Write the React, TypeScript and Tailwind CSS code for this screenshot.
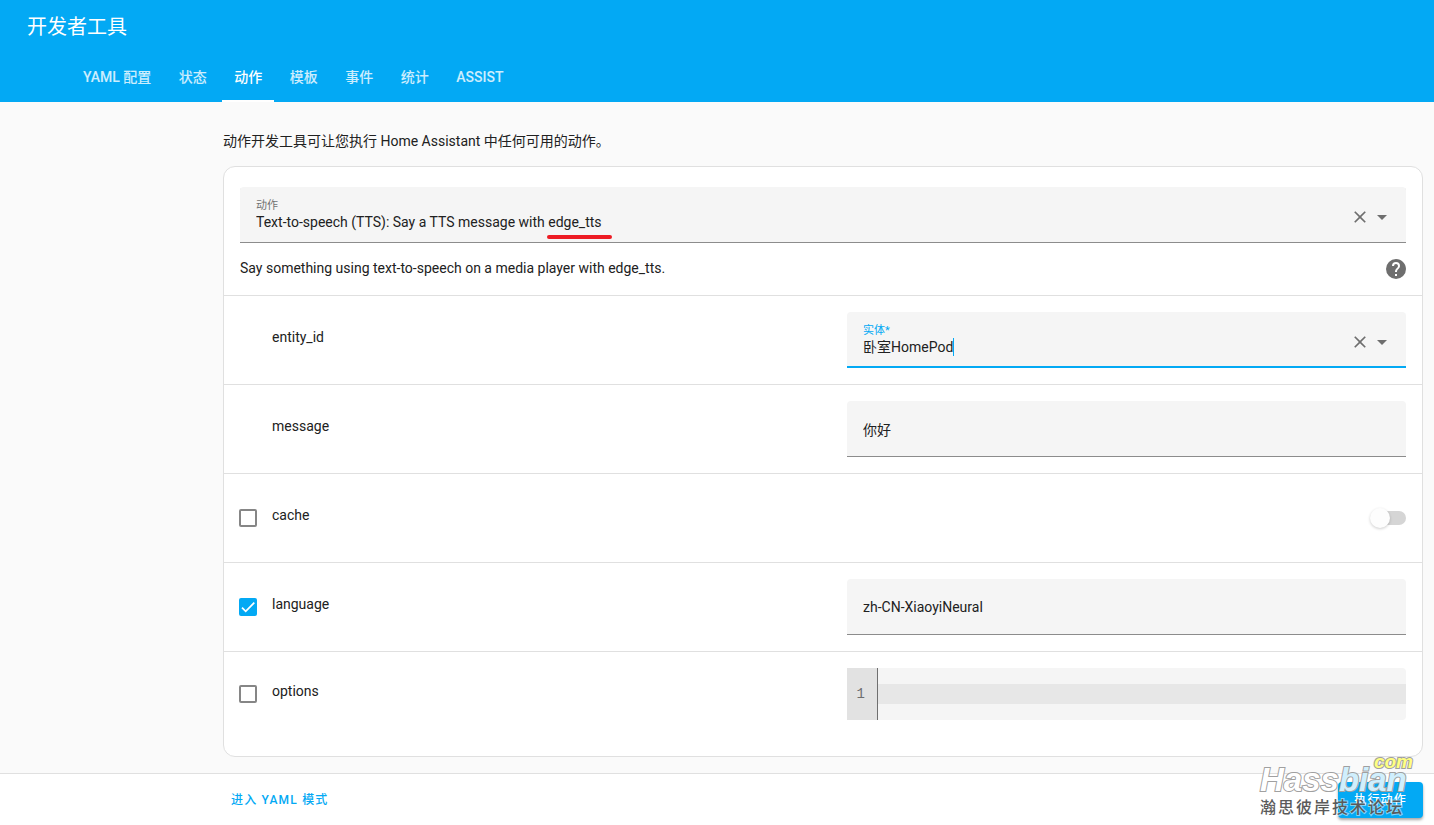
import { useState } from 'react'
import type { ReactNode } from 'react'
import clsx from 'clsx'

const TABS = ['YAML 配置', '状态', '动作', '模板', '事件', '统计', 'ASSIST']

const ICONS = {
  close:
    'M19,6.41L17.59,5L12,10.59L6.41,5L5,6.41L10.59,12L5,17.59L6.41,19L12,13.41L17.59,19L19,17.59L13.41,12L19,6.41Z',
  menuDown: 'M7,10L12,15L17,10H7Z',
  help: 'M15.07,11.25L14.17,12.17C13.45,12.89 13,13.5 13,15H11V14.5C11,13.39 11.45,12.39 12.17,11.67L13.41,10.41C13.78,10.05 14,9.55 14,9C14,7.89 13.1,7 12,7A2,2 0 0,0 10,9H8A4,4 0 0,1 12,5A4,4 0 0,1 16,9C16,9.88 15.64,10.67 15.07,11.25M13,19H11V17H13M12,2A10,10 0 0,0 2,12A10,10 0 0,0 12,22A10,10 0 0,0 22,12C22,6.47 17.5,2 12,2Z',
}

function Icon({
  path,
  className,
  viewBox = '0 0 24 24',
}: {
  path: string
  className: string
  viewBox?: string
}) {
  return (
    <svg viewBox={viewBox} className={className} fill="currentColor" aria-hidden="true">
      <path d={path} />
    </svg>
  )
}

function ComboField({
  id,
  label,
  value,
  active = false,
  children,
}: {
  id: string
  label: string
  value: string
  active?: boolean
  children?: ReactNode
}) {
  const [text, setText] = useState(value)
  return (
    <div
      className={clsx(
        'relative flex h-14 rounded-t bg-[#f5f5f5] pr-3 pl-4',
        active
          ? 'shadow-[inset_0_-2px_0_#03a9f4]'
          : 'shadow-[inset_0_-1px_0_#8c8c8c]',
      )}
    >
      <div className="min-w-0 flex-1 pt-[13px]">
        <label
          htmlFor={id}
          className={clsx(
            'block h-3 text-[11px] leading-3',
            active ? 'text-[#03a9f4]' : 'text-[#727272]',
          )}
        >
          {label}
        </label>
        <div className="flex h-5 items-center">
          <input
            id={id}
            role="combobox"
            aria-expanded={false}
            aria-controls={`${id}-list`}
            value={text}
            onChange={(e) => setText(e.target.value)}
            className={clsx(
              'h-5 bg-transparent leading-5 outline-none',
              active ? 'field-sizing-content caret-transparent' : 'w-full',
            )}
          />
          {active && <span className="h-[18px] w-px bg-[#03a9f4]" />}
        </div>
      </div>
      <div className="flex items-center pt-1 text-[#6e6e6e]">
        <button type="button" aria-label="清除" onClick={() => setText('')}>
          <Icon path={ICONS.close} className="size-5" />
        </button>
        <button type="button" aria-label="展开">
          <Icon path={ICONS.menuDown} className="size-6" />
        </button>
      </div>
      {children}
    </div>
  )
}

function TextField({ id, value }: { id: string; value: string }) {
  return (
    <input
      id={id}
      defaultValue={value}
      className="h-14 w-full rounded-t border-b border-[#8c8c8c] bg-[#f5f5f5] px-4 outline-none"
    />
  )
}

function Checkbox({ id, checked }: { id: string; checked: boolean }) {
  return (
    <span className="grid size-[18px] shrink-0">
      <input
        id={id}
        type="checkbox"
        defaultChecked={checked}
        className="peer col-start-1 row-start-1 size-[18px] appearance-none rounded-xs border-2 border-[#868686] bg-white checked:border-[#03a9f4] checked:bg-[#03a9f4]"
      />
      <svg
        viewBox="0 0 24 24"
        className="pointer-events-none invisible col-start-1 row-start-1 m-0.5 size-3.5 peer-checked:visible"
        fill="none"
        stroke="#fff"
        strokeWidth="3"
        aria-hidden="true"
      >
        <path d="M1.73,12.91 8.1,19.28 22.79,4.59" />
      </svg>
    </span>
  )
}

function Row({
  name,
  checked,
  children,
}: {
  name: string
  checked?: boolean
  children: ReactNode
}) {
  return (
    <div className="grid grid-cols-2 items-center border-t border-[#e0e0e0] py-4">
      <div className="flex items-center gap-[15px] pl-[15px]">
        {checked !== undefined ? (
          <Checkbox id={`use-${name}`} checked={checked} />
        ) : (
          <span className="size-[18px]" />
        )}
        <label
          htmlFor={checked !== undefined ? `use-${name}` : `field-${name}`}
          className="pb-1.5"
        >
          {name}
        </label>
      </div>
      <div className="pr-4 pl-6">{children}</div>
    </div>
  )
}

function Switch({ label }: { label: string }) {
  return (
    <label className="flex h-14 items-center justify-end">
      <input type="checkbox" role="switch" aria-label={label} className="peer sr-only" />
      <span className="relative h-3.5 w-8 rounded-full bg-[#d5d5d5] peer-checked:bg-[#81d4fa]">
        <span className="absolute -top-[3px] -left-1 size-5 rounded-full bg-[#fdfdfd] shadow-[0_1px_3px_rgba(0,0,0,0.2)]" />
      </span>
    </label>
  )
}

function CodeEditor({ label }: { label: string }) {
  return (
    <div className="flex h-[52px] rounded-r bg-[#f5f5f5]">
      <div className="w-[31px] border-r border-[#6f6f6f] bg-[#e2e2e2] py-4 pr-3 text-right font-['Liberation_Mono',monospace] text-[#6e6e6e]">
        1
      </div>
      <div className="flex-1 py-4">
        <textarea
          aria-label={label}
          rows={1}
          className="block h-5 w-full resize-none bg-[#e7e7e7] px-1.5 font-['Liberation_Mono',monospace] outline-none"
        />
      </div>
    </div>
  )
}

function Watermark() {
  return (
    <div className="pointer-events-none absolute right-[21px] bottom-[7px] w-[153px]">
      <div className="text-right font-['Liberation_Sans',sans-serif] text-[19px] leading-3 font-bold text-[#ffff80] italic [-webkit-text-stroke:2px_#a0a0a0] [paint-order:stroke_fill]">
        com
      </div>
      <div className="font-['Liberation_Sans',sans-serif] text-[33px] leading-6 font-bold text-white italic [-webkit-text-stroke:2px_#a0a0a0] [paint-order:stroke_fill]">
        Hass<span className="text-[#d0effd]">bian</span>
      </div>
      <div className="pt-1.5 text-[16px] leading-5 font-medium tracking-[2px] whitespace-nowrap text-[#5a5a5a] [-webkit-text-stroke:2px_#ffffff80] [paint-order:stroke_fill]">
        瀚思彼岸技术论坛
      </div>
    </div>
  )
}

export default function App() {
  const [tab, setTab] = useState('动作')
  return (
    <div className="relative flex min-h-screen flex-col bg-[#fafafa] font-[Roboto,'Noto_Sans_CJK_SC',sans-serif] text-sm text-[#212121]">
      <header className="bg-[#03a9f4] text-white">
        <h1 className="flex h-[52px] items-center px-[27px] pt-0.5 text-xl">开发者工具</h1>
        <nav role="tablist" className="h-[50px] pl-[71px]">
          {TABS.map((name) => (
            <span key={name}>
              <button
                type="button"
                role="tab"
                aria-selected={name === tab}
                onClick={() => setTab(name)}
                className={clsx(
                  'h-[50px] border-y-2 border-transparent px-3 font-medium',
                  name === tab ? 'border-b-white' : 'text-white/80',
                )}
              >
                {name}
              </button>{' '}
            </span>
          ))}
        </nav>
      </header>

      <main className="flex-1 pt-[29px] pr-[11px] pb-4 pl-[223px]">
        <p>动作开发工具可让您执行 Home Assistant 中任何可用的动作。</p>
        <section className="mt-[15px] rounded-xl border border-[#e0e0e0] bg-white py-5">
          <div className="px-4">
            <ComboField
              id="action"
              label="动作"
              value="Text-to-speech (TTS): Say a TTS message with edge_tts"
            >
              <span className="absolute bottom-1 left-[307px] h-1 w-[65px] rounded-full bg-[#ed1c24]" />
            </ComboField>
            <div className="flex h-[52px] items-center justify-between">
              <p className="pb-0.5">
                Say something using text-to-speech on a media player with edge_tts.
              </p>
              <a href="#help" aria-label="帮助" className="text-[#6e6e6e]">
                <Icon path={ICONS.help} viewBox="2 2 20 20" className="size-5" />
              </a>
            </div>
          </div>
          <Row name="entity_id">
            <ComboField id="field-entity_id" label="实体*" value="卧室HomePod" active />
          </Row>
          <Row name="message">
            <TextField id="field-message" value="你好" />
          </Row>
          <Row name="cache" checked={false}>
            <Switch label="cache" />
          </Row>
          <Row name="language" checked>
            <TextField id="field-language" value="zh-CN-XiaoyiNeural" />
          </Row>
          <Row name="options" checked={false}>
            <CodeEditor label="options" />
          </Row>
        </section>
      </main>

      <footer className="flex h-[52px] items-center justify-between border-t border-[#e0e0e0] bg-white pr-[11px] pl-[223px] text-xs font-medium tracking-widest">
        <button type="button" className="h-9 px-2 text-[#03a9f4]">
          进入 YAML 模式
        </button>
        <button
          type="button"
          className="h-9 rounded bg-[#03a9f4] px-4 text-white shadow-[0_2px_3px_rgba(0,0,0,0.35)]"
        >
          执行动作
        </button>
      </footer>
      <Watermark />
    </div>
  )
}
